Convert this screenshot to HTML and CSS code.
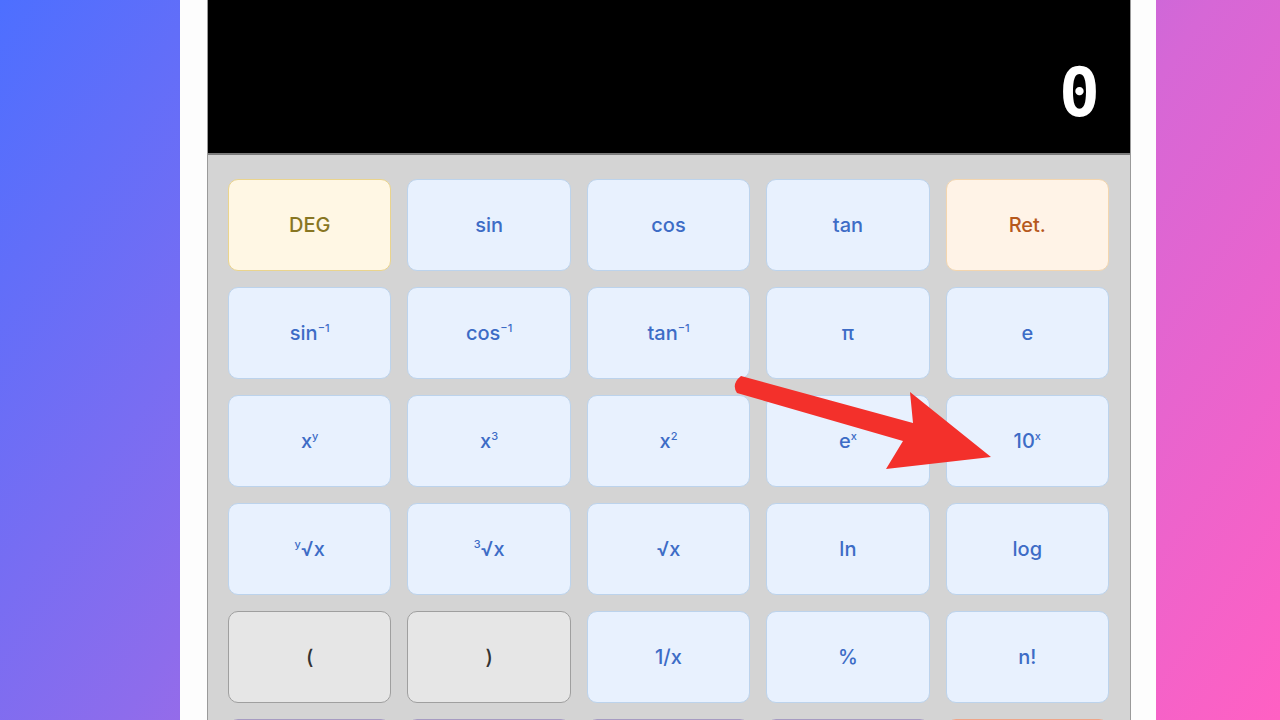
FILE: index.html
```html
<!DOCTYPE html>
<html lang="en">
<head>
    <meta charset="UTF-8">
    <meta name="viewport" content="width=device-width, initial-scale=1.0">
    <title>Scientific Calculator</title>
    <link rel="stylesheet" href="styles.css">
</head>
<body>
    <div class="page">
        <div class="calculator">
            <div class="display">
                <span class="display-value">0</span>
            </div>
            <div class="keypad">
                <button class="key key-mode">DEG</button>
                <button class="key">sin</button>
                <button class="key">cos</button>
                <button class="key">tan</button>
                <button class="key key-ret">Ret.</button>

                <button class="key">sin<sup>&minus;1</sup></button>
                <button class="key">cos<sup>&minus;1</sup></button>
                <button class="key">tan<sup>&minus;1</sup></button>
                <button class="key">&pi;</button>
                <button class="key">e</button>

                <button class="key">x<sup>y</sup></button>
                <button class="key">x<sup>3</sup></button>
                <button class="key">x<sup>2</sup></button>
                <button class="key">e<sup>x</sup></button>
                <button class="key">10<sup>x</sup></button>

                <button class="key"><sup>y</sup>&radic;x</button>
                <button class="key"><sup>3</sup>&radic;x</button>
                <button class="key">&radic;x</button>
                <button class="key">ln</button>
                <button class="key">log</button>

                <button class="key key-gray">(</button>
                <button class="key key-gray">)</button>
                <button class="key">1/x</button>
                <button class="key">%</button>
                <button class="key">n!</button>

                <!-- next row, only its top edge is in view -->
                <button class="key key-mem" aria-label="MC"></button>
                <button class="key key-mem" aria-label="MR"></button>
                <button class="key key-mem" aria-label="M+"></button>
                <button class="key key-mem" aria-label="M-"></button>
                <button class="key key-op" aria-label="divide"></button>
            </div>
        </div>
    </div>

    <!-- annotation arrow over the keypad -->
    <svg class="arrow" viewBox="0 0 1280 720" width="1280" height="720">
        <path d="M741 376 L913 423 L910 392 L991 457 L886 469 L903 441 L737 393 Q731 384 741 376 Z" fill="#f3302b"/>
    </svg>
</body>
</html>
```

FILE: styles.css
```css
/* Основные стили */
html, body {
    height: 100%;
}

body {
    margin: 0;
    overflow: hidden;
    font-family: 'Inter', 'Lato', sans-serif;
    background: linear-gradient(125deg, #4d6fff 0%, #8d6cec 35%, #d667d6 68%, #ff60c3 100%);
}

.page {
    width: 976px;
    height: 100%;
    margin-left: 180px;
    background: #fdfdfd;
    padding: 0 25px 0 27px;
    box-sizing: border-box;
}

.calculator {
    border-left: 1px solid #9a9a9a;
    border-right: 1px solid #9a9a9a;
    background: #d4d4d4;
    height: 100%;
}

.display {
    height: 155px;
    background: #000;
    border-bottom: 2px solid #7c7c7c;
    display: flex;
    align-items: center;
    justify-content: flex-end;
    padding-right: 30px;
    box-sizing: border-box;
}

.display-value {
    color: #fff;
    font-family: 'DejaVu Sans Mono', monospace;
    font-weight: bold;
    font-size: 68px;
    margin-top: 32px;
}

.keypad {
    display: grid;
    grid-template-columns: repeat(5, 1fr);
    grid-auto-rows: 92px;
    gap: 16px;
    padding: 24px 21px 0 20px;
}

.key {
    font-family: 'Inter', 'Lato', sans-serif;
    font-size: 20px;
    font-weight: 500;
    color: #3d6cc6;
    background: #e8f1fe;
    border: 1px solid #bcd3ec;
    border-radius: 10px;
    cursor: pointer;
    padding: 0;
}

.key sup {
    font-size: 11px;
    vertical-align: 8px;
    line-height: 0;
}

.key-mode {
    background: #fff7e4;
    border-color: #ead48d;
    color: #887622;
}

.key-ret {
    background: #fff3e7;
    border-color: #f3d5ae;
    color: #b6581d;
}

.key-gray {
    background: #e6e6e6;
    border-color: #9f9f9f;
    color: #333;
}

.key-mem {
    background: #ece8f6;
    border-color: #a69bc2;
}

.key-op {
    background: #fde9df;
    border-color: #f0a487;
}

.arrow {
    position: absolute;
    left: 0;
    top: 0;
    pointer-events: none;
}
```
